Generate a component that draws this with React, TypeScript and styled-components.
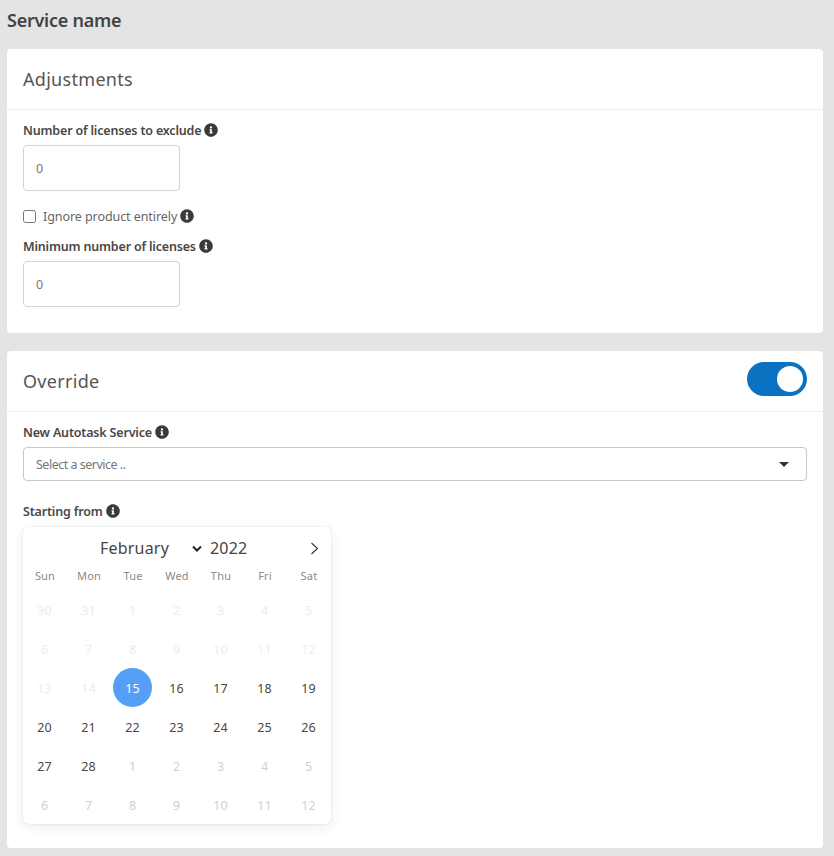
import React from 'react';
import styled, { createGlobalStyle } from 'styled-components';
import { FaInfoCircle } from 'react-icons/fa';

const font = `"Noto Sans", "Liberation Sans", sans-serif`;

const GlobalStyle = createGlobalStyle`
  html, body {
    margin: 0;
    background: #e4e4e4;
  }
  * {
    box-sizing: border-box;
  }
`;

const Page = styled.div`
  padding: 0 11px 8px 7px;
  font-family: ${font};
  color: #454545;
`;

const PageTitle = styled.h1`
  margin: 0;
  height: 49px;
  padding-top: 8px;
  font-size: 18px;
  line-height: 24px;
  font-weight: 600;
  letter-spacing: -0.25px;
  color: #444;
`;

const Card = styled.section`
  background: #fff;
  border-radius: 4px;
  margin-bottom: 18px;
`;

const CardHeader = styled.header`
  height: 61px;
  padding: 0 16px;
  display: flex;
  align-items: center;
  justify-content: space-between;
  border-bottom: 1px solid #eceeef;
`;

const CardTitle = styled.h2`
  margin: 0;
  font-size: 18px;
  font-weight: 400;
  letter-spacing: 0.3px;
  color: #555;
`;

const CardBody = styled.div<{ $bottom: number }>`
  padding: 10px 16px ${p => p.$bottom}px;
`;

const Label = styled.label<{ $top?: number }>`
  display: flex;
  align-items: center;
  gap: 3px;
  height: 20px;
  margin-top: ${p => p.$top ?? 0}px;
  font-size: 12.5px;
  font-weight: 600;
  letter-spacing: -0.18px;
  color: #484848;
`;

const Info = styled(FaInfoCircle)`
  width: 14px;
  height: 14px;
  color: #3a3a3a;
  flex: none;
`;

const NumberInput = styled.div`
  width: 157px;
  height: 46px;
  margin-top: 5px;
  padding: 0 12px;
  display: flex;
  align-items: center;
  border: 1px solid #d4d4d4;
  border-radius: 4px;
  font-size: 12.5px;
  color: #777;
`;

const CheckRow = styled.label`
  display: flex;
  align-items: center;
  height: 20px;
  margin-top: 15px;
  font-size: 12.5px;
  letter-spacing: -0.07px;
  color: #666;
`;

const Check = styled.input`
  width: 13px;
  height: 13px;
  margin: 0 7px 0 0;
`;

const CheckInfo = styled(Info)`
  margin-left: 3px;
`;

const Toggle = styled.div`
  width: 60px;
  height: 34px;
  margin-bottom: 4px;
  border-radius: 17px;
  background: #0b72c2;
  padding: 4px 4px 4px 30px;
`;

const Knob = styled.div`
  width: 26px;
  height: 26px;
  border-radius: 50%;
  background: #fff;
`;

const Select = styled.div`
  height: 34px;
  margin-top: 5px;
  padding: 0 17px 0 12px;
  display: flex;
  align-items: center;
  justify-content: space-between;
  border: 1px solid #c8c8c8;
  border-radius: 4px;
  font-size: 12.5px;
  letter-spacing: -0.5px;
  color: #777;
`;

const Caret = styled.span`
  width: 0;
  height: 0;
  border-left: 5px solid transparent;
  border-right: 5px solid transparent;
  border-top: 5px solid #333;
`;

const Calendar = styled.div`
  width: 308px;
  height: 297px;
  margin-top: 6px;
  border-radius: 5px;
  background: #fff;
  box-shadow: 0 0 1px #bbb, 0 3px 12px rgba(0, 0, 0, 0.08);
`;

const MonthRow = styled.div`
  height: 39px;
  padding: 3px 12px 0 77px;
  display: flex;
  align-items: center;
  font-size: 16px;
  letter-spacing: 0.2px;
  color: #444;
`;

const MonthName = styled.span`
  width: 92px;
`;

const Chevron = styled.svg`
  width: 10px;
  height: 7px;
  margin-right: 8px;
`;

const Year = styled.span`
  flex: 1;
`;

const NextArrow = styled.svg`
  width: 9px;
  height: 13px;
`;

const Grid = styled.div`
  display: grid;
  grid-template-columns: repeat(7, 44px);
`;

const Weekday = styled.div`
  height: 18px;
  display: flex;
  align-items: center;
  justify-content: center;
  font-size: 11px;
  letter-spacing: 0.2px;
  color: #8a8a8a;
`;

const WeekGrid = styled(Grid)`
  grid-auto-rows: 39px;
  padding-top: 6px;
`;

const dayColors = {
  faded: '#ececec',
  muted: '#d0d0d0',
  current: '#484848',
  selected: '#fff',
};

type DayKind = keyof typeof dayColors;

const Day = styled.div<{ $kind: DayKind }>`
  width: 39px;
  height: 39px;
  margin-left: 2px;
  padding-top: 2px;
  display: flex;
  align-items: center;
  justify-content: center;
  border-radius: 50%;
  font-size: 12.5px;
  color: ${p => dayColors[p.$kind]};
  background: ${p => (p.$kind === 'selected' ? '#569ff7' : 'transparent')};
`;

const weekdays = ['Sun', 'Mon', 'Tue', 'Wed', 'Thu', 'Fri', 'Sat'];

const days: [number, DayKind][] = [
  ...[30, 31, 1, 2, 3, 4, 5, 6, 7, 8, 9, 10, 11, 12, 13, 14].map(d => [d, 'faded'] as [number, DayKind]),
  [15, 'selected'],
  ...Array.from({ length: 13 }, (_, i) => [i + 16, 'current'] as [number, DayKind]),
  ...[1, 2, 3, 4, 5, 6, 7, 8, 9, 10, 11, 12].map(d => [d, 'muted'] as [number, DayKind]),
];

function App() {
  return (
    <Page>
      <GlobalStyle />
      <PageTitle>Service name</PageTitle>
      <Card>
        <CardHeader>
          <CardTitle>Adjustments</CardTitle>
        </CardHeader>
        <CardBody $bottom={26}>
          <Label>
            Number of licenses to exclude <Info />
          </Label>
          <NumberInput>0</NumberInput>
          <CheckRow>
            <Check type="checkbox" />
            Ignore product entirely
            <CheckInfo />
          </CheckRow>
          <Label $top={10}>
            Minimum number of licenses <Info />
          </Label>
          <NumberInput>0</NumberInput>
        </CardBody>
      </Card>
      <Card>
        <CardHeader>
          <CardTitle>Override</CardTitle>
          <Toggle>
            <Knob />
          </Toggle>
        </CardHeader>
        <CardBody $bottom={24}>
          <Label>
            New Autotask Service <Info />
          </Label>
          <Select>
            Select a service ..
            <Caret />
          </Select>
          <Label $top={20}>
            Starting from <Info />
          </Label>
          <Calendar>
            <MonthRow>
              <MonthName>February</MonthName>
              <Chevron viewBox="0 0 10 7">
                <path d="M1 1.5 L5 5.5 L9 1.5" fill="none" stroke="#222" strokeWidth="2" />
              </Chevron>
              <Year>2022</Year>
              <NextArrow viewBox="0 0 9 13">
                <path d="M1.5 1 L7.5 6.5 L1.5 12" fill="none" stroke="#333" strokeWidth="1.1" />
              </NextArrow>
            </MonthRow>
            <Grid>
              {weekdays.map(w => (
                <Weekday key={w}>{w}</Weekday>
              ))}
            </Grid>
            <WeekGrid>
              {days.map(([d, kind], i) => (
                <Day key={i} $kind={kind}>
                  {d}
                </Day>
              ))}
            </WeekGrid>
          </Calendar>
        </CardBody>
      </Card>
    </Page>
  );
}

export default App;
